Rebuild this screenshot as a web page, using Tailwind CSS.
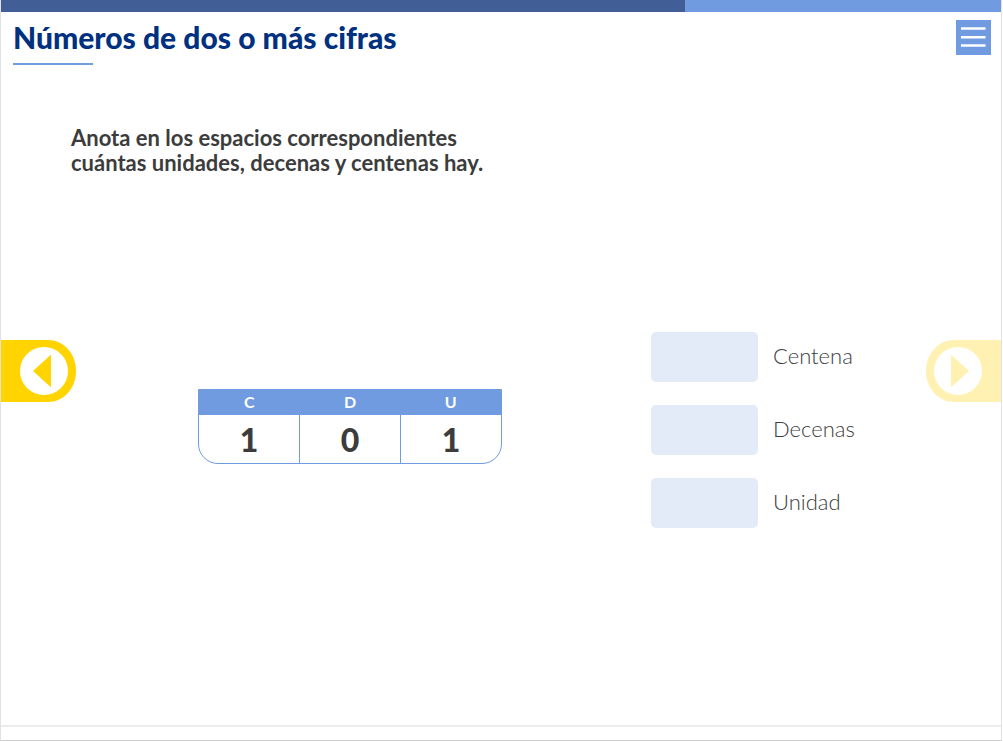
<!DOCTYPE html>
<html lang="es">
<head>
    <meta charset="UTF-8">
    <meta name="viewport" content="width=device-width, initial-scale=1.0">
    <title>Números de dos o más cifras</title>
    <script src="https://cdn.jsdelivr.net/npm/@tailwindcss/browser@4"></script>
</head>
<body class="bg-white font-['Lato',sans-serif] text-[#3c3c3c] pr-px">

    <div class="min-h-screen flex flex-col border-l border-r border-b border-[#e2e2e2] border-b-[#cccccc]">

        <!-- Progress -->
        <div class="h-3 bg-[#709be0]" role="progressbar" aria-label="Avance" aria-valuenow="68" aria-valuemin="0" aria-valuemax="100">
            <div class="h-full bg-[#415f96]" style="width: 68.4%"></div>
        </div>

        <header class="flex items-start justify-between pl-3 pr-[10px] pt-2">
            <div>
                <h1 class="text-[30px] leading-[34px] font-black text-[#003080]">Números de dos o más cifras</h1>
                <div class="mt-[9px] w-20 h-[2px] bg-[#709be0]"></div>
            </div>
            <button type="button" aria-label="Menú" class="size-[35px] bg-[#709be0]">
                <svg class="size-full" viewBox="0 0 35 35" stroke="#fff" stroke-width="2.4">
                    <path d="M5 8.500H29.500M5 17.200H29.500M5 25.500H29.500"/>
                </svg>
            </button>
        </header>

        <main class="flex-1">
            <p class="mt-[60px] ml-[70px] max-w-[440px] text-[22px] leading-[25px] font-bold">Anota en los espacios correspondientes cuántas unidades, decenas y centenas hay.</p>

            <div class="mt-[157px] flex items-start justify-between">
                <button type="button" aria-label="Anterior" class="mt-2 shrink-0 w-[75px] h-[62px]">
                    <svg class="size-full" viewBox="0 0 75 62">
                        <path fill="#ffd400" d="M0 0H47C62 0 75 13 75 31S62 62 47 62H0Z"/>
                        <circle cx="43" cy="31" r="24" fill="#fff"/>
                        <path fill="#ffd400" d="M49 15.5Q50 14.5 50 16V46Q50 47.500 49 46.500L32 31Z"/>
                    </svg>
                </button>

                <div class="flex-1 pl-[2px] grid grid-cols-2 items-start">
                    <div class="mt-[57px] justify-self-end w-[304px] border border-[#709be0] rounded-b-[20px] overflow-hidden">
                        <table class="w-full table-fixed text-center">
                            <thead>
                                <tr class="bg-[#709be0] text-white text-base leading-[23px]">
                                    <th scope="col" class="pb-[2px] font-bold">C</th>
                                    <th scope="col" class="pb-[2px] font-bold">D</th>
                                    <th scope="col" class="pb-[2px] font-bold">U</th>
                                </tr>
                            </thead>
                            <tbody>
                                <tr class="text-[32px] leading-[46px] font-black divide-x divide-[#709be0]">
                                    <td class="pt-[2px]">1</td>
                                    <td class="pt-[2px]">0</td>
                                    <td class="pt-[2px]">1</td>
                                </tr>
                            </tbody>
                        </table>
                    </div>

                    <!-- Answers -->
                    <div class="pl-[149px] flex flex-col gap-[23px] text-[22px] leading-[48px] font-light">
                        <div class="flex items-start gap-[15px]">
                            <input id="centena" type="text" inputmode="numeric" class="w-[107px] h-[50px] rounded-[5px] bg-[#e3eaf8] text-center">
                            <label for="centena">Centena</label>
                        </div>
                        <div class="flex items-start gap-[15px]">
                            <input id="decenas" type="text" inputmode="numeric" class="w-[107px] h-[50px] rounded-[5px] bg-[#e3eaf8] text-center">
                            <label for="decenas">Decenas</label>
                        </div>
                        <div class="flex items-start gap-[15px]">
                            <input id="unidad" type="text" inputmode="numeric" class="w-[107px] h-[50px] rounded-[5px] bg-[#e3eaf8] text-center">
                            <label for="unidad">Unidad</label>
                        </div>
                    </div>
                </div>

                <button type="button" aria-label="Siguiente" disabled class="mt-2 shrink-0 w-[75px] h-[62px] opacity-30">
                    <svg class="size-full" viewBox="0 0 75 62">
                        <path fill="#ffd400" d="M75 0H28C13 0 0 13 0 31S13 62 28 62H75Z"/>
                        <circle cx="32" cy="31" r="24" fill="#fff"/>
                        <path fill="#ffd400" d="M26 15.5Q25 14.5 25 16V46Q25 47.500 26 46.500L43 31Z"/>
                    </svg>
                </button>
            </div>
        </main>

        <footer class="h-[15px] border-t-2 border-[#ececec]"></footer>
    </div>

</body>
</html>
